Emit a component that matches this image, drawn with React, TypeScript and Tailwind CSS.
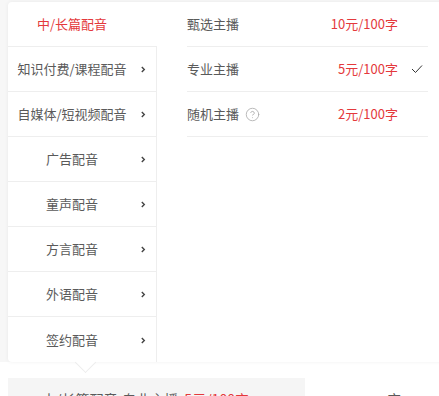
import { CircleHelp } from 'lucide-react';

const categories = [
	'中/长篇配音',
	'知识付费/课程配音',
	'自媒体/短视频配音',
	'广告配音',
	'童声配音',
	'方言配音',
	'外语配音',
	'签约配音',
];

const anchors = [
	{ name: '甄选主播', price: '10元/100字', help: false, checked: false },
	{ name: '专业主播', price: '5元/100字', help: false, checked: true },
	{ name: '随机主播', price: '2元/100字', help: true, checked: false },
];

function Chevron() {
	return (
		<svg width="6" height="9" viewBox="0 0 6 9" fill="none">
			<path d="M1.8 2 L4.3 4.5 L1.8 7" stroke="#444" strokeWidth="1.4" />
		</svg>
	);
}

function Check() {
	return (
		<svg width="12" height="10" viewBox="0 0 12 10" fill="none">
			<path d="M1 5 L4.5 8.5 L11 1.5" stroke="#333" strokeWidth="1" />
		</svg>
	);
}

export default function App() {
	return (
		<div
			className="h-[396px] w-[439px] overflow-hidden bg-white text-[13px] leading-[20px] text-[#5a5a5a]"
			style={{ fontFamily: '"Microsoft YaHei", "Noto Sans CJK SC", sans-serif' }}
		>
			<div className="bg-[#f7f7f7] pl-[8px] pt-[2px]">
				<div className="relative flex h-[360px] w-[441px] rounded-[4px] bg-white shadow-[0_0_4px_rgba(0,0,0,0.06)]">
					<div className="flex w-[149px] flex-col">
						{categories.map((c, i) => (
							<div
								key={c}
								className={
									i === 0
										? 'flex h-[45px] shrink-0 items-center border-b border-[#eee]'
										: i === categories.length - 1
											? 'flex h-[45px] shrink-0 items-center border-r border-[#eee]'
											: 'flex h-[45px] shrink-0 items-center border-b border-r border-[#eee]'
								}
							>
								<span
									className={
										i === 0
											? 'w-[128px] text-center text-[#e4393c]'
											: 'w-[128px] text-center'
									}
								>
									{c}
								</span>
								{i > 0 && (
									<span className="ml-[4px] flex items-center pt-[1px]">
										<Chevron />
									</span>
								)}
							</div>
						))}
					</div>
					<div className="flex flex-1 flex-col pl-[30px] pr-[21px]">
						{anchors.map((a) => (
							<div key={a.name} className="flex h-[45px] items-center border-b border-[#eee]">
								<span className="flex flex-1 items-center gap-[6px]">
									{a.name}
									{a.help && <CircleHelp size={15} strokeWidth={1.3} color="#aaa" />}
								</span>
								<span className="text-[#e4393c]">{a.price}</span>
								<span className="flex w-[30px] justify-end pr-[5px]">{a.checked && <Check />}</span>
							</div>
						))}
					</div>
					<div className="absolute left-[70px] top-[353px] h-[15px] w-[15px] rotate-45 border-b border-r border-[#ececec] bg-white" />
				</div>
			</div>
			<div className="flex items-start bg-white pl-[8px] pt-[16px]">
				<div className="flex h-[40px] w-[297px] bg-[#f5f5f5] pl-[34px] pt-[11px] text-[14px]">
					<span className="text-[#5a5a5a]">中/长篇配音-专业主播</span>
					<span className="ml-[6px] text-[#e4393c]">5元/100字</span>
				</div>
				<div className="flex pl-[38px] pt-[11px] text-[14px] text-[#5a5a5a]">
					<span>›</span>
					<span className="ml-[40px]">字</span>
				</div>
			</div>
		</div>
	);
}
